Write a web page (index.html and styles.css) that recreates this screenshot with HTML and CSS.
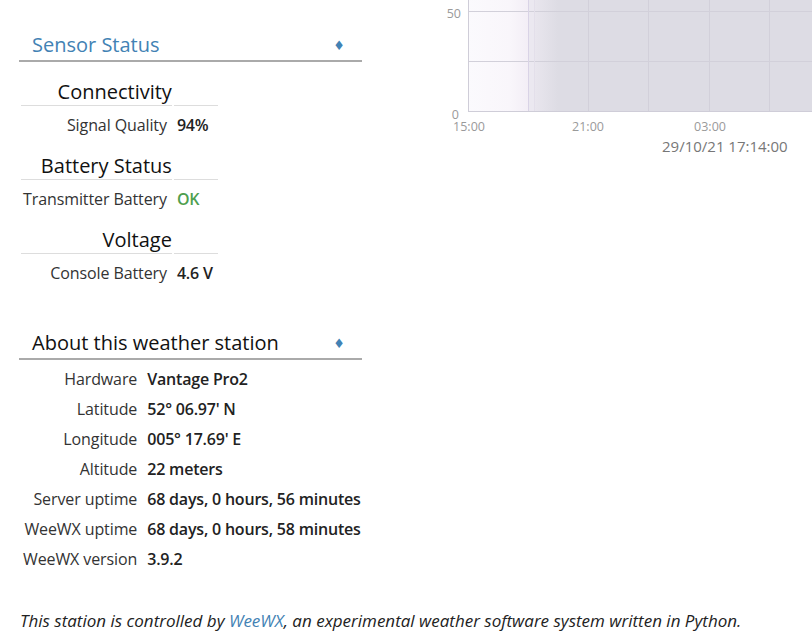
FILE: index.html
```html
<!doctype html>
<html lang="en">
  <head>
    <meta charset="UTF-8" />
    <title>Weather station</title>
    <link rel="stylesheet" href="styles.css">
  </head>
  <body>
    <div class="page">
      <div class="left-col">
        <div class="widget">
          <div class="widget-title title-blue">
            <span>Sensor Status</span>
            <span class="toggle">&#9830;</span>
          </div>
          <table class="sensors">
            <tr><th class="group">Connectivity</th><th></th></tr>
            <tr><td class="label">Signal Quality</td><td class="data">94%</td></tr>
            <tr><th class="group">Battery Status</th><th></th></tr>
            <tr><td class="label">Transmitter Battery</td><td class="data status-ok">OK</td></tr>
            <tr><th class="group">Voltage</th><th></th></tr>
            <tr><td class="label">Console Battery</td><td class="data">4.6 V</td></tr>
          </table>
        </div>

        <div class="widget about">
          <div class="widget-title">
            <span>About this weather station</span>
            <span class="toggle">&#9830;</span>
          </div>
          <table class="station">
            <tr><td class="label">Hardware</td><td class="data">Vantage Pro2</td></tr>
            <tr><td class="label">Latitude</td><td class="data">52&deg; 06.97' N</td></tr>
            <tr><td class="label">Longitude</td><td class="data">005&deg; 17.69' E</td></tr>
            <tr><td class="label">Altitude</td><td class="data">22 meters</td></tr>
            <tr><td class="label">Server uptime</td><td class="data">68 days, 0 hours, 56 minutes</td></tr>
            <tr><td class="label">WeeWX uptime</td><td class="data">68 days, 0 hours, 58 minutes</td></tr>
            <tr><td class="label">WeeWX version</td><td class="data">3.9.2</td></tr>
          </table>
        </div>
      </div>

      <div class="right-col">
        <svg class="plot" width="372" height="136" viewBox="0 0 372 136">
          <defs>
            <linearGradient id="fresh" x1="0" x2="1" y1="0" y2="0">
              <stop offset="0" stop-color="#fbfafd" />
              <stop offset="0.7" stop-color="#f9f6fb" />
              <stop offset="1" stop-color="#f3eef6" />
            </linearGradient>
            <linearGradient id="shade" x1="0" x2="1" y1="0" y2="0">
              <stop offset="0" stop-color="#e9e6ee" />
              <stop offset="1" stop-color="#dddce4" />
            </linearGradient>
          </defs>
          <!-- plot area -->
          <rect x="28" y="0" width="60" height="111" fill="url(#fresh)" />
          <rect x="88" y="0" width="6" height="111" fill="#ebe8f0" />
          <rect x="94" y="0" width="24" height="111" fill="url(#shade)" />
          <rect x="118" y="0" width="254" height="111" fill="#dddce4" />
          <!-- grid -->
          <g stroke="#d2d0da" stroke-width="1">
            <line x1="28" y1="11.5" x2="372" y2="11.5" />
            <line x1="28" y1="61.5" x2="372" y2="61.5" />
            <line x1="88.5" y1="0" x2="88.5" y2="111" stroke="#d9d3e6" />
            <line x1="94.5" y1="0" x2="94.5" y2="111" stroke="#e3dfea" />
            <line x1="148.5" y1="0" x2="148.5" y2="111" />
            <line x1="208.5" y1="0" x2="208.5" y2="111" />
            <line x1="269.5" y1="0" x2="269.5" y2="111" />
            <line x1="329.5" y1="0" x2="329.5" y2="111" />
          </g>
          <line x1="28.5" y1="0" x2="28.5" y2="111" stroke="#cfcdd8" />
          <line x1="28" y1="111.5" x2="372" y2="111.5" stroke="#cfcdd8" />
          <!-- axis labels -->
          <g class="axis-text">
            <text x="21" y="18" text-anchor="end">50</text>
            <text x="19" y="119" text-anchor="end">0</text>
            <text x="29" y="131" text-anchor="middle">15:00</text>
            <text x="148" y="131" text-anchor="middle">21:00</text>
            <text x="270" y="131" text-anchor="middle">03:00</text>
          </g>
        </svg>
        <div class="timestamp">29/10/21 17:14:00</div>
      </div>
    </div>

    <p class="footer">
      This station is controlled by <a href="#">WeeWX</a>, an experimental weather software system written in Python.
    </p>
  </body>
</html>
```

FILE: styles.css
```css
body {
  font-family: "Open Sans", "DejaVu Sans", sans-serif;
  margin: 0;
  padding: 0 0 0 19px;
  background-color: #ffffff;
  color: #222;
  overflow: hidden;
}
.page {
  display: flex;
  align-items: flex-start;
}
.left-col {
  width: 343px;
  padding-top: 30px;
}
.right-col {
  margin-left: 78px;
  width: 372px;
}
.plot {
  display: block;
}
.axis-text text {
  font-family: "Open Sans", sans-serif;
  font-size: 12.5px;
  fill: #9a9a9a;
}
.timestamp {
  font-size: 15px;
  line-height: 20px;
  color: #777;
  padding-left: 222px;
  white-space: nowrap;
}
.widget-title {
  display: flex;
  justify-content: space-between;
  align-items: center;
  font-size: 20px;
  line-height: 30px;
  padding: 0 17px 0 13px;
  border-bottom: 2px solid #aaa;
  color: #111;
}
.title-blue {
  color: #4282b4;
}
.toggle {
  font-size: 13px;
  color: #4282b4;
}
table {
  border-spacing: 2px;
  font-size: 16px;
  white-space: nowrap;
}
.sensors {
  margin-top: 5px;
}
.sensors th {
  font-size: 20px;
  font-weight: normal;
  line-height: 26px;
  padding: 10px 0 0 0;
  text-align: right;
  border-bottom: 1px solid #ddd;
  color: #111;
}
.sensors td {
  line-height: 24px;
  padding: 5px 5px 4px 2px;
}
.about {
  margin-top: 37px;
}
.station {
  margin-top: 3px;
}
.station td {
  line-height: 24px;
  padding: 2px 5px 2px 2px;
}
td.label {
  text-align: right;
  color: #333;
  letter-spacing: -0.1px;
}
td.data {
  font-weight: 600;
  color: #222;
  padding-left: 3px;
  letter-spacing: -0.2px;
}
.status-ok {
  color: #4f9f4f !important;
}
.footer {
  margin: 34px 0 0 1px;
  font-size: 17px;
  line-height: 24px;
  font-style: italic;
  color: #222;
  white-space: nowrap;
}
.footer a {
  color: #4282b4;
  text-decoration: none;
}
```
